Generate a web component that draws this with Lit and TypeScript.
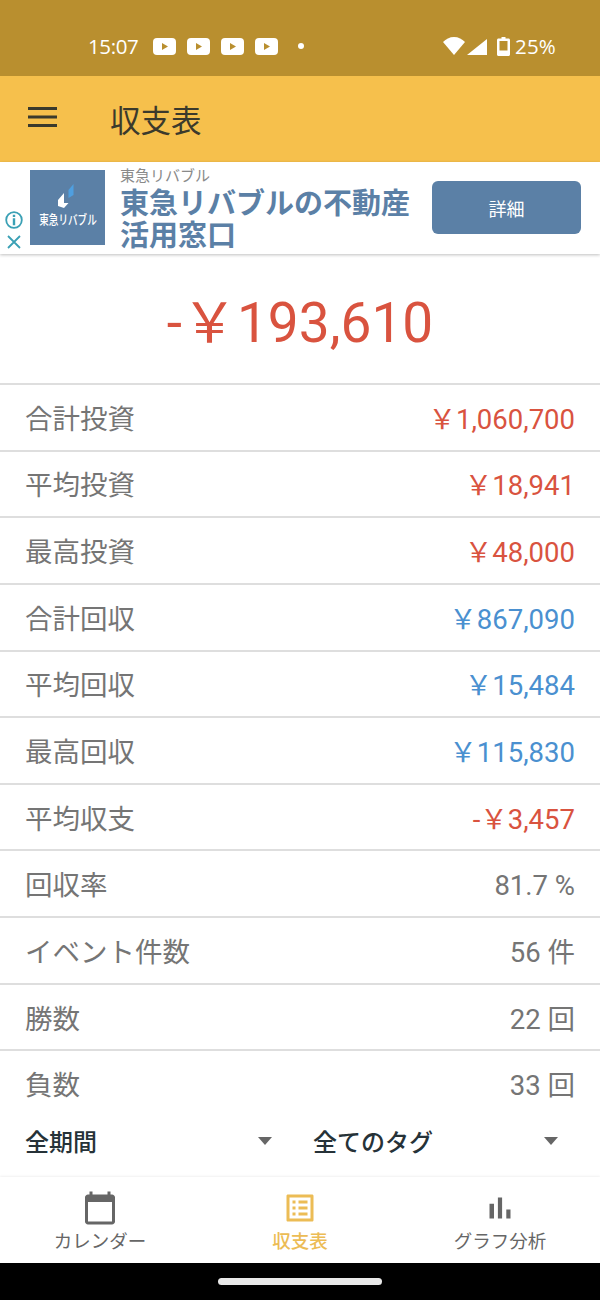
import { LitElement, css, html, svg } from "lit";
import { customElement } from "lit/decorators.js";
import { classMap } from "lit/directives/class-map.js";

type Row = { label: string; value: string; tone?: "loss" | "gain" };

// fullwidth yen sign, the halfwidth one is too narrow here
const YEN = "\uFFE5";

const rows: Row[] = [
  { label: "合計投資", value: `${YEN}1,060,700`, tone: "loss" },
  { label: "平均投資", value: `${YEN}18,941`, tone: "loss" },
  { label: "最高投資", value: `${YEN}48,000`, tone: "loss" },
  { label: "合計回収", value: `${YEN}867,090`, tone: "gain" },
  { label: "平均回収", value: `${YEN}15,484`, tone: "gain" },
  { label: "最高回収", value: `${YEN}115,830`, tone: "gain" },
  { label: "平均収支", value: `-${YEN}3,457`, tone: "loss" },
  { label: "回収率", value: "81.7 %" },
  { label: "イベント件数", value: "56 件" },
  { label: "勝数", value: "22 回" },
  { label: "負数", value: "33 回" },
];

const tabs = [
  {
    label: "カレンダー",
    path: "M20 3h-1V1h-2v2H7V1H5v2H4c-1.1 0-2 .9-2 2v16c0 1.1.9 2 2 2h16c1.1 0 2-.9 2-2V5c0-1.1-.9-2-2-2zm0 18H4V8h16v13z",
  },
  {
    label: "収支表",
    active: true,
    path: "M19 5v14H5V5h14m1.1-2H3.9c-.5 0-.9.4-.9.9v16.2c0 .4.4.9.9.9h16.2c.4 0 .9-.5.9-.9V3.9c0-.5-.5-.9-.9-.9zM11 7h6v2h-6V7zm0 4h6v2h-6v-2zm0 4h6v2h-6zM7 7h2v2H7zm0 4h2v2H7zm0 4h2v2H7z",
  },
  {
    label: "グラフ分析",
    path: "M5 9.2h3V19H5zM10.6 5h2.8v14h-2.8zm5.6 8H19v6h-2.8z",
  },
];

const youtube = svg`<svg class="yt" viewBox="0 0 23 17" width="23" height="17">
  <rect width="23" height="17" rx="4" fill="#fff"></rect>
  <path d="M9 5l6 3.5-6 3.5z" fill="#b98f2f"></path>
</svg>`;

@customElement("app-root")
export class AppRoot extends LitElement {
  render() {
    return html`
      <div class="status">
        <span class="time">15:07</span>
        <span class="yts">${youtube}${youtube}${youtube}${youtube}</span>
        <span class="dot"></span>
        <span class="spacer"></span>
        <svg class="wifi" viewBox="0 0 22 18" width="22" height="18">
          <path d="M0 5C3 2 6.5 0 11 0s8 2 11 5L11 18z" fill="#fff"></path>
        </svg>
        <svg class="signal" viewBox="0 0 20 16" width="20" height="16">
          <path d="M20 0v16H0z" fill="#fff"></path>
        </svg>
        <svg class="battery" viewBox="0 0 13 19" width="13" height="19">
          <path fill="#fff" fill-rule="evenodd"
            d="M4.5 0h4v1.5h3c.8 0 1.5.7 1.5 1.5v14.5c0 .8-.7 1.5-1.5 1.5h-10C.7 19 0 18.3 0 17.5V3c0-.8.7-1.5 1.5-1.5h3zM2.5 4v9.5h8V4z"></path>
        </svg>
        <span class="pct">25%</span>
      </div>

      <header class="bar">
        <svg class="menu" viewBox="0 0 29 20" width="29" height="20">
          <path d="M0 0h29v3H0zM0 8.5h29v3H0zM0 17h29v3H0z" fill="#3b3a2c"></path>
        </svg>
        <h1>収支表</h1>
      </header>

      <aside class="ad">
        <div class="ad-marks">
          <svg viewBox="0 0 18 18" width="18" height="18">
            <circle cx="9" cy="9" r="7.8" fill="none" stroke="#3aa0b5" stroke-width="1.8"></circle>
            <path d="M7.8 3.8h2.4V6H7.8zM7.8 7.3h2.4v7H7.8z" fill="#3aa0b5"></path>
          </svg>
          <svg viewBox="0 0 16 16" width="16" height="16">
            <path d="M2 2l12 12M14 2L2 14" stroke="#3aa0b5" stroke-width="1.8" fill="none"></path>
          </svg>
        </div>
        <div class="logo">
          <svg viewBox="0 0 20 24" width="20" height="24">
            <path d="M6 9L0 16v6l6 2 4.5-5H6z" fill="#fff"></path>
            <path d="M10.5 6l5-6v11l-5 3z" fill="#4f9fe0"></path>
          </svg>
          <span>東急リバブル</span>
        </div>
        <div class="ad-copy">
          <div class="ad-brand">東急リバブル</div>
          <div class="ad-head">東急リバブルの不動産<br />活用窓口</div>
        </div>
        <button class="ad-btn">詳細</button>
      </aside>

      <div class="total"><span>-</span><span>${YEN}</span><span>193,610</span></div>

      <dl class="rows">
        ${rows.map(
          (r) => html`
            <div class="row">
              <dt>${r.label}</dt>
              <dd class=${classMap({ loss: r.tone === "loss", gain: r.tone === "gain" })}>${r.value}</dd>
            </div>
          `
        )}
      </dl>

      <div class="filters">
        <div class="filter"><span>全期間</span><i class="caret"></i></div>
        <div class="filter"><span>全てのタグ</span><i class="caret"></i></div>
      </div>

      <nav class="tabs">
        ${tabs.map(
          (t) => html`
            <div class=${classMap({ tab: true, active: !!t.active })}>
              <svg viewBox="0 0 24 24" width="36" height="36"><path d=${t.path} fill="currentColor"></path></svg>
              <span>${t.label}</span>
            </div>
          `
        )}
      </nav>

      <div class="gesture"><span></span></div>
    `;
  }

  static styles = css`
    :host {
      display: block;
      width: 600px;
      height: 1300px;
      background: #fff;
      font-family: Roboto, "Noto Sans CJK JP", sans-serif;
      overflow: hidden;
    }

    .status {
      height: 76px;
      box-sizing: border-box;
      padding: 34px 44px 0 88px;
      background: #b98f2f;
      color: #fff;
      display: flex;
      align-items: flex-start;
    }
    .status svg {
      flex: none;
    }
    .time,
    .pct {
      font-family: "Open Sans", sans-serif;
      font-size: 20.5px;
      line-height: 24px;
    }
    .time {
      width: 65px;
      letter-spacing: -0.4px;
    }
    .yts {
      display: flex;
      gap: 11px;
      margin-top: 4px;
    }
    .dot {
      width: 6px;
      height: 6px;
      border-radius: 50%;
      background: #fff;
      margin: 9px 0 0 20px;
    }
    .spacer {
      flex: 1;
    }
    .wifi {
      margin-top: 3px;
    }
    .signal {
      margin: 5px 0 0 2px;
    }
    .battery {
      margin: 3px 0 0 10px;
    }
    .pct {
      margin-left: 5px;
      letter-spacing: 0.2px;
    }

    .bar {
      height: 86px;
      background: #f6c04c;
      display: flex;
      align-items: center;
      padding-left: 28px;
    }
    .menu {
      margin-top: -5px;
    }
    h1 {
      margin: 0 0 0 53px;
      font-size: 30.5px;
      font-weight: 400;
      color: #3b3a2c;
    }

    .ad {
      height: 92px;
      box-sizing: border-box;
      display: flex;
      background: #fff;
      box-shadow: 0 1px 3px rgba(0, 0, 0, 0.25);
      position: relative;
    }
    .ad-marks {
      width: 30px;
      display: flex;
      flex-direction: column;
      align-items: center;
      justify-content: flex-end;
      gap: 5px;
      padding: 0 3px 4px 0;
      box-sizing: border-box;
    }
    .logo {
      width: 75px;
      height: 75px;
      margin-top: 8px;
      background: #5b80a6;
      color: #fff;
      display: flex;
      flex-direction: column;
      align-items: center;
      padding-top: 14px;
      box-sizing: border-box;
      gap: 5px;
    }
    .logo span {
      font-size: 13px;
      line-height: 14px;
      font-weight: 500;
      white-space: nowrap;
      transform: scaleX(0.74);
    }
    .ad-copy {
      margin-left: 15px;
      width: 312px;
    }
    .ad-brand {
      font-size: 15px;
      line-height: 18px;
      margin-top: 5px;
      margin-bottom: 3px;
      color: #8a8a8a;
    }
    .ad-head {
      font-size: 29px;
      line-height: 32px;
      font-weight: 700;
      color: #5b80a6;
      white-space: nowrap;
    }
    .ad-btn {
      width: 149px;
      height: 53px;
      margin-top: 19px;
      border: none;
      border-radius: 6px;
      background: #5b80a6;
      color: #fff;
      font: 400 18px "Noto Sans CJK JP", sans-serif;
      padding: 0;
    }

    .total {
      height: 129px;
      box-sizing: border-box;
      padding-top: 8px;
      display: flex;
      align-items: center;
      justify-content: center;
      font-size: 55px;
      line-height: 66px;
      color: #d9533f;
    }

    .rows {
      margin: 0;
      display: grid;
      grid-auto-rows: 66.65px;
    }
    .row {
      border-top: 2px solid #dedede;
      display: flex;
      justify-content: space-between;
      align-items: center;
      padding: 5px 25px 0 25px;
    }
    dt {
      font-size: 27.5px;
      line-height: 40px;
      color: #757575;
    }
    dd {
      margin: 0;
      font-size: 27.5px;
      line-height: 40px;
      color: #757575;
    }
    .loss {
      color: #d9533f;
    }
    .gain {
      color: #4a90d0;
    }

    .filters {
      height: 61px;
      display: grid;
      grid-template-columns: 288px 245px;
      padding: 0 0 12px 25px;
      box-sizing: border-box;
      background: #fff;
    }
    .filter {
      display: flex;
      align-items: center;
      justify-content: space-between;
      font-size: 24px;
      font-weight: 500;
      color: #263238;
    }
    .filter:first-child {
      padding-right: 41px;
    }
    .caret {
      width: 0;
      height: 0;
      border: 7.5px solid transparent;
      border-top: 8px solid #666;
      border-bottom: none;
    }

    .tabs {
      height: 86px;
      display: grid;
      grid-template-columns: repeat(3, 1fr);
      background: #fff;
      box-shadow: 0 -1px 2px rgba(0, 0, 0, 0.06);
      position: relative;
    }
    .tab {
      display: flex;
      flex-direction: column;
      align-items: center;
      padding-top: 13px;
      color: #666;
    }
    .tab span {
      font-size: 18.5px;
      line-height: 26px;
      margin-top: 3px;
    }
    .tab.active {
      color: #ecbc55;
    }
    .tab.active span {
      font-weight: 500;
    }

    .gesture {
      height: 38px;
      background: #000;
      display: flex;
      justify-content: center;
      padding-top: 15px;
      box-sizing: border-box;
    }
    .gesture span {
      width: 164px;
      height: 7px;
      border-radius: 4px;
      background: #e8e8e8;
    }
  `;
}
